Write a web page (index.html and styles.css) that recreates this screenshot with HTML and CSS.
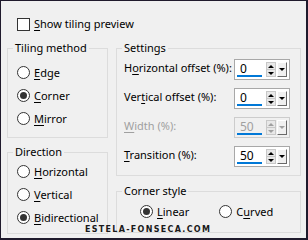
FILE: index.html
```html
<!DOCTYPE html>
<html lang="en">
<head>
  <meta charset="UTF-8">
  <title>Tiling</title>
  <link rel="stylesheet" href="styles.css">
</head>
<body>
  <div class="dialog">
    <div class="check-row">
      <span class="checkbox"></span>
      <span><u>S</u>how tiling preview</span>
    </div>

    <div class="columns">
      <div class="col-left">
        <fieldset class="group group-tiling">
          <legend>Tiling method</legend>
          <div class="radio-list">
            <div class="radio-row"><span class="radio"></span><span><u>E</u>dge</span></div>
            <div class="radio-row"><span class="radio checked"></span><span><u>C</u>orner</span></div>
            <div class="radio-row"><span class="radio"></span><span><u>M</u>irror</span></div>
          </div>
        </fieldset>

        <fieldset class="group group-direction">
          <legend>Direction</legend>
          <div class="radio-list">
            <div class="radio-row"><span class="radio"></span><span><u>H</u>orizontal</span></div>
            <div class="radio-row"><span class="radio"></span><span><u>V</u>ertical</span></div>
            <div class="radio-row"><span class="radio checked"></span><span><u>B</u>idirectional</span></div>
          </div>
        </fieldset>
      </div>

      <div class="col-right">
        <fieldset class="group group-settings">
          <legend>Settings</legend>
          <div class="field-list">
            <div class="field-row">
              <span class="field-label">H<u>o</u>rizontal offset (%):</span>
              <div class="spin">
                <span class="spin-value">0</span>
                <span class="spin-arrows"><i class="up"></i><i class="down"></i></span>
                <span class="spin-drop"><i class="down"></i></span>
              </div>
            </div>
            <div class="field-row">
              <span class="field-label">Ver<u>t</u>ical offset (%):</span>
              <div class="spin">
                <span class="spin-value">0</span>
                <span class="spin-arrows"><i class="up"></i><i class="down"></i></span>
                <span class="spin-drop"><i class="down"></i></span>
              </div>
            </div>
            <div class="field-row disabled">
              <span class="field-label"><u>W</u>idth (%):</span>
              <div class="spin">
                <span class="spin-value">50</span>
                <span class="spin-arrows"><i class="up"></i><i class="down"></i></span>
                <span class="spin-drop"><i class="down"></i></span>
              </div>
            </div>
            <div class="field-row">
              <span class="field-label"><u>T</u>ransition (%):</span>
              <div class="spin">
                <span class="spin-value">50</span>
                <span class="spin-arrows"><i class="up"></i><i class="down"></i></span>
                <span class="spin-drop"><i class="down"></i></span>
              </div>
            </div>
          </div>
        </fieldset>

        <fieldset class="group group-corner">
          <legend>Corner style</legend>
          <div class="radio-inline">
            <div class="radio-row"><span class="radio checked"></span><span><u>L</u>inear</span></div>
            <div class="radio-row"><span class="radio"></span><span>C<u>u</u>rved</span></div>
          </div>
        </fieldset>
      </div>
    </div>

    <div class="watermark">ESTELA-FONSECA.COM</div>
  </div>
</body>
</html>
```

FILE: styles.css
```css
* {
  margin: 0;
  padding: 0;
  box-sizing: border-box;
}

body {
  width: 308px;
  height: 240px;
  font-family: 'Noto Sans', 'Open Sans', sans-serif;
  font-size: 11px;
  color: #000000;
  background: #1f1a2c;
  overflow: hidden;
}

u {
  text-decoration-thickness: 1px;
  text-underline-offset: 2px;
}

.dialog {
  position: relative;
  width: 308px;
  height: 240px;
  background: #f0f0f0;
  border-style: solid;
  border-color: #1f1a2c;
  border-width: 1px 2px 2px 1px;
  padding: 15px 5px 0 6px;
  display: flex;
  flex-direction: column;
  gap: 8px;
}

.check-row {
  height: 16px;
  display: flex;
  align-items: center;
  gap: 4px;
  padding-left: 10px;
  line-height: 16px;
}

.checkbox {
  width: 13px;
  height: 13px;
  border: 1px solid #333333;
  background: #ffffff;
}

.columns {
  display: flex;
  gap: 8px;
}

.col-left {
  width: 101px;
  display: flex;
  flex-direction: column;
  gap: 6px;
}

.col-right {
  flex: 1;
  display: flex;
  flex-direction: column;
  gap: 7px;
}

.group {
  border: 1px solid #dcdcdc;
  min-width: 0;
}

.group legend {
  margin-left: 5px;
  padding: 0 2px;
  line-height: 16px;
}

.group-tiling { height: 98px; }
.group-direction { height: 90px; }
.group-settings { height: 136px; }
.group-corner { height: 50px; }

.radio-list {
  display: flex;
  flex-direction: column;
  padding-left: 9px;
}

.group-tiling .radio-list { padding-top: 5px; }

.radio-row {
  height: 23px;
  display: flex;
  align-items: center;
  gap: 4px;
}

.radio {
  width: 13px;
  height: 13px;
  border: 1px solid #333333;
  border-radius: 50%;
  background: #ffffff;
  display: flex;
  align-items: center;
  justify-content: center;
}

.radio.checked::after {
  content: '';
  width: 7px;
  height: 7px;
  border-radius: 50%;
  background: #333333;
}

.radio-inline {
  display: flex;
  padding: 4px 0 0 23px;
  gap: 30px;
}

.radio-inline .radio-row {
  height: 16px;
}

.field-list {
  display: flex;
  flex-direction: column;
  gap: 8px;
  padding: 3px 0 0 7px;
}

.field-row {
  height: 21px;
  display: flex;
  align-items: center;
  justify-content: space-between;
  padding-right: 10px;
}

.field-label {
  white-space: nowrap;
  padding-bottom: 4px;
}

.spin {
  width: 56px;
  height: 21px;
  border: 1px solid #a8a8a8;
  background: #ffffff;
  display: flex;
  align-items: stretch;
  padding: 2px;
}

.spin-value {
  flex: 1;
  padding-left: 3px;
  line-height: 14px;
  font-size: 12px;
  border-bottom: 2px solid #0078d7;
  margin-right: 4px;
}

.spin-arrows {
  width: 10px;
  display: flex;
  flex-direction: column;
  border: 1px solid #c8c8c8;
  background: #e8e8e8;
}

.spin-arrows i {
  flex: 1;
  display: flex;
  align-items: center;
  justify-content: center;
}

.spin-arrows i + i {
  border-top: 1px solid #c8c8c8;
}

.spin-arrows i::after,
.spin-drop i::after {
  content: '';
  border-left: 3px solid transparent;
  border-right: 3px solid transparent;
}

.spin-arrows .up::after {
  border-bottom: 3px solid #000000;
}

.spin-arrows .down::after,
.spin-drop .down::after {
  border-top: 3px solid #000000;
}

.spin-drop {
  width: 10px;
  margin-left: 1px;
  display: flex;
  align-items: center;
  justify-content: center;
  background: #f0f0f0;
  border-style: solid;
  border-width: 1px;
  border-color: #ffffff #696969 #696969 #ffffff;
}

.spin-drop i {
  display: flex;
}

.disabled {
  color: #a0a0a0;
}

.disabled .spin {
  border-color: #cccccc;
  background: #f0f0f0;
}

.disabled .spin-value {
  color: #a0a0a0;
}

.disabled .spin-arrows .up::after {
  border-bottom-color: #a0a0a0;
}

.disabled .spin-arrows .down::after,
.disabled .spin-drop .down::after {
  border-top-color: #a0a0a0;
}

.watermark {
  position: absolute;
  left: 84px;
  top: 224px;
  font-family: 'DejaVu Sans', sans-serif;
  font-weight: bold;
  font-size: 8px;
  letter-spacing: 1.3px;
  line-height: 10px;
  color: #1a1a1a;
}
```
